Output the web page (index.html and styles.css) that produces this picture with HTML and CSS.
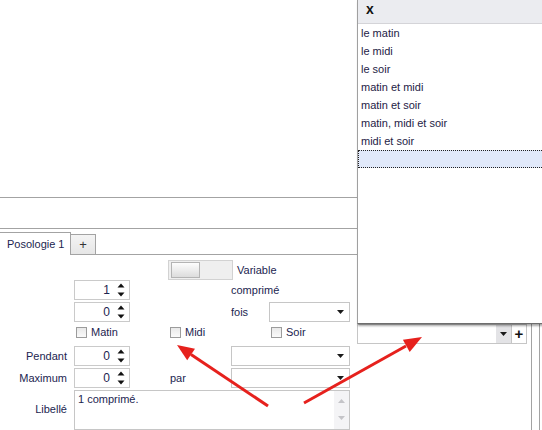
FILE: index.html
```html
<!DOCTYPE html>
<html lang="fr">
<head>
    <meta charset="UTF-8">
    <meta name="viewport" content="width=device-width, initial-scale=1.0">
    <title>Posologie</title>
    <link rel="stylesheet" href="styles.css">
</head>
<body>
<div class="app">
    <div class="main">
        <div class="preview"></div>
        <div class="band"></div>

        <div class="tabs">
            <div class="tab active">Posologie 1</div>
            <div class="tab add">+</div>
        </div>

        <div class="form">
            <div class="toggle-row">
                <div class="toggle"><span class="knob"></span></div>
                <span>Variable</span>
            </div>

            <div class="spin row2"><span>1</span>
                <svg class="spin-arrows" width="8" height="14" viewBox="0 0 8 14"><path d="M4 0.5 L7.5 4.5 H0.5Z"/><path d="M0.5 9.5 H7.5 L4 13.5Z"/></svg>
            </div>
            <div class="text row2 col-right">comprimé</div>

            <div class="spin row3"><span>0</span>
                <svg class="spin-arrows" width="8" height="14" viewBox="0 0 8 14"><path d="M4 0.5 L7.5 4.5 H0.5Z"/><path d="M0.5 9.5 H7.5 L4 13.5Z"/></svg>
            </div>
            <div class="fois row3 col-right">
                <span class="fois-label">fois</span>
                <div class="combo"><svg class="drop" width="7" height="4" viewBox="0 0 7 4"><path d="M0 0 H7 L3.5 4Z"/></svg></div>
            </div>

            <label class="check row4 col-spin"><span class="box"></span>Matin</label>
            <label class="check row4 col-mid"><span class="box"></span>Midi</label>
            <label class="check row4 col-right soir"><span class="box"></span>Soir</label>

            <div class="label row5">Pendant</div>
            <div class="spin row5"><span>0</span>
                <svg class="spin-arrows" width="8" height="14" viewBox="0 0 8 14"><path d="M4 0.5 L7.5 4.5 H0.5Z"/><path d="M0.5 9.5 H7.5 L4 13.5Z"/></svg>
            </div>
            <div class="combo row5 col-right"><svg class="drop" width="7" height="4" viewBox="0 0 7 4"><path d="M0 0 H7 L3.5 4Z"/></svg></div>

            <div class="label row6">Maximum</div>
            <div class="spin row6"><span>0</span>
                <svg class="spin-arrows" width="8" height="14" viewBox="0 0 8 14"><path d="M4 0.5 L7.5 4.5 H0.5Z"/><path d="M0.5 9.5 H7.5 L4 13.5Z"/></svg>
            </div>
            <div class="text row6 col-mid par">par</div>
            <div class="combo row6 col-right"><svg class="drop" width="7" height="4" viewBox="0 0 7 4"><path d="M0 0 H7 L3.5 4Z"/></svg></div>

            <div class="label row7">Libellé</div>
            <div class="memo row7">
                <div class="memo-text">1 comprimé.</div>
                <div class="memo-scroll">
                    <svg width="7" height="4" viewBox="0 0 7 4"><path d="M3.5 0 L7 4 H0Z"/></svg>
                    <svg width="7" height="4" viewBox="0 0 7 4"><path d="M0 0 H7 L3.5 4Z"/></svg>
                </div>
            </div>
        </div>
    </div>

    <div class="side">
        <div class="side-main">
            <div class="side-combo">
                <div class="side-input"></div>
                <div class="side-drop"><svg width="7" height="4" viewBox="0 0 7 4"><path d="M0 0 H7 L3.5 4Z"/></svg></div>
                <div class="side-add">+</div>
            </div>
        </div>
        <div class="rail"></div>
    </div>

    <!-- dropdown list opened from the combo on the right -->
    <div class="popup">
        <div class="popup-head">x</div>
        <ul class="popup-list">
            <li>le matin</li>
            <li>le midi</li>
            <li>le soir</li>
            <li>matin et midi</li>
            <li>matin et soir</li>
            <li>matin, midi et soir</li>
            <li>midi et soir</li>
            <li class="selected"></li>
        </ul>
    </div>

    <svg class="arrows" width="542" height="430" viewBox="0 0 542 430">
        <line x1="268" y1="406" x2="191" y2="354.5"/>
        <polygon points="177,345 195,348.7 187.2,360.3"/>
        <line x1="304" y1="403" x2="406" y2="346"/>
        <polygon points="422,337 409.7,351.9 402.9,339.7"/>
    </svg>
</div>
</body>
</html>
```

FILE: styles.css
```css
body {
    margin: 0;
    font-family: "Liberation Sans", Arial, sans-serif;
    font-size: 11px;
    color: #1c2550;
    background: #fff;
}

.app {
    position: relative;
    display: flex;
    width: 542px;
    height: 430px;
    overflow: hidden;
}

.main {
    width: 357px;
    flex: none;
}

.preview {
    height: 197px;
    border-bottom: 1px solid #a3a3a3;
}

.band {
    height: 30px;
    border-bottom: 1px solid #a3a3a3;
}

/* tab strip */
.tabs {
    display: flex;
    align-items: flex-end;
    height: 25px;
    border-bottom: 1px solid #a3a3a3;
}

.tab {
    box-sizing: border-box;
    border: 1px solid #a3a3a3;
    border-bottom: none;
}

.tab.active {
    width: 71px;
    height: 23px;
    margin-bottom: -1px;
    border-left: none;
    background: #fff;
    padding: 5px 0 0 7px;
}

.tab.add {
    width: 25px;
    height: 20px;
    border-left: none;
    background: linear-gradient(#f4f4f4, #e6e6e6);
    text-align: center;
    font-size: 13px;
    line-height: 19px;
    color: #333;
}

/* form grid */
.form {
    display: grid;
    grid-template-columns: 74px 56px 38px 63px 119px;
    grid-template-rows: 20px 22px 22px 22px 22px 22px 40px;
    padding-top: 5px;
}

.row2 { grid-row: 2; }
.row3 { grid-row: 3; }
.row4 { grid-row: 4; }
.row5 { grid-row: 5; }
.row6 { grid-row: 6; }
.row7 { grid-row: 7; }

.col-spin { grid-column: 2; }
.col-mid { grid-column: 4; }
.col-right { grid-column: 5; }

.label {
    grid-column: 1;
    text-align: right;
    padding-right: 7px;
    line-height: 20px;
}

.row7.label {
    line-height: 38px;
}

.text {
    line-height: 20px;
}

.par {
    padding-left: 2px;
}

.toggle-row {
    grid-row: 1;
    grid-column: 4 / 6;
    display: flex;
    align-items: center;
    gap: 4px;
}

.toggle {
    box-sizing: border-box;
    flex: none;
    width: 65px;
    height: 20px;
    border: 1px solid #d2d2d2;
    background: #efefef;
    padding: 1px 2px;
}

.knob {
    display: block;
    box-sizing: border-box;
    width: 29px;
    height: 16px;
    border: 1px solid #b4b4b4;
    background: linear-gradient(#fdfdfd, #dcdcdc);
}

.spin {
    grid-column: 2;
    box-sizing: border-box;
    height: 20px;
    border: 1px solid #cacaca;
    display: flex;
    align-items: center;
    justify-content: flex-end;
    gap: 7px;
    padding-right: 4px;
    font-size: 12px;
}

.spin-arrows {
    fill: #111;
}

.combo {
    box-sizing: border-box;
    height: 20px;
    border: 1px solid #c6c6c6;
    display: flex;
    align-items: center;
    justify-content: flex-end;
    padding-right: 5px;
}

.drop {
    fill: #1a1a1a;
}

.fois {
    display: flex;
    align-items: flex-start;
}

.fois-label {
    width: 38px;
    line-height: 20px;
}

.fois .combo {
    flex: 1;
}

.check {
    display: flex;
    align-items: center;
    gap: 4px;
    padding-left: 2px;
    height: 16px;
}

.check.soir {
    padding-left: 40px;
}

.box {
    box-sizing: border-box;
    width: 11px;
    height: 11px;
    border: 1px solid #9c9c9c;
    background: linear-gradient(#e9e9e9, #fafafa);
}

.memo {
    grid-column: 2 / 6;
    box-sizing: border-box;
    height: 40px;
    border: 1px solid #c6c6c6;
    display: flex;
}

.memo-text {
    flex: 1;
    padding: 2px 3px;
    font-size: 11px;
}

.memo-scroll {
    width: 15px;
    background: #f4f4f6;
    display: flex;
    flex-direction: column;
    align-items: center;
    justify-content: space-between;
    padding: 8px 0 9px;
    fill: #c4c4c8;
}

/* right column below the dropdown */
.side {
    flex: 1;
    display: flex;
}

.side-main {
    width: 174px;
    padding-top: 324px;
}

.side-combo {
    display: flex;
    height: 20px;
}

.side-input {
    width: 139px;
    box-sizing: border-box;
    border: 1px solid #c6c6c6;
    border-right: none;
}

.side-drop {
    box-sizing: border-box;
    width: 15px;
    border-top: 1px solid #c6c6c6;
    border-bottom: 1px solid #c6c6c6;
    background: #e3e3e6;
    display: flex;
    align-items: center;
    justify-content: center;
    fill: #1a1a1a;
}

.side-add {
    box-sizing: border-box;
    width: 16px;
    border: 1px solid #c6c6c6;
    text-align: center;
    font-weight: bold;
    font-size: 15px;
    line-height: 17px;
    color: #111;
}

.rail {
    width: 7px;
    border-left: 1px solid #a3a3a3;
    border-right: 1px solid #a3a3a3;
}

/* dropdown popup */
.popup {
    position: absolute;
    top: 0;
    left: 357px;
    width: 190px;
    height: 323px;
    background: #fff;
    border-left: 1px solid #a0a0a0;
    border-bottom: 1px solid #6e6e6e;
    box-shadow: 1px 2px 2px rgba(0, 0, 0, 0.35);
}

.popup-head {
    height: 23px;
    background: #ebecf0;
    border-bottom: 1px solid #d4d4d8;
    padding-left: 8px;
    font-weight: bold;
    font-size: 14px;
    line-height: 19px;
    color: #111;
}

.popup-list {
    list-style: none;
    margin: 0;
    padding: 0;
}

.popup-list li {
    box-sizing: border-box;
    height: 18px;
    line-height: 18px;
    padding-left: 3px;
    color: #1e2246;
}

.popup-list li.selected {
    background: #e1e9fa;
    border: 1px dotted #222;
}

/* red annotation arrows */
.arrows {
    position: absolute;
    top: 0;
    left: 0;
    pointer-events: none;
}

.arrows line {
    stroke: #e6211d;
    stroke-width: 3;
}

.arrows polygon {
    fill: #e6211d;
}
```
